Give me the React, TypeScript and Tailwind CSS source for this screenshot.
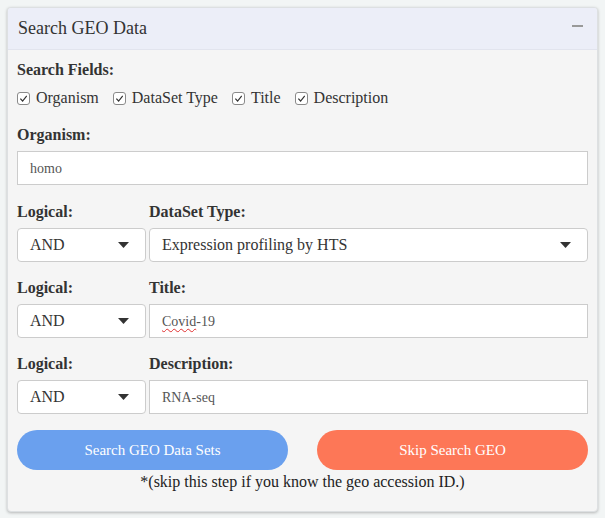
import React from 'react';

const serif = { fontFamily: '"Liberation Serif", "Times New Roman", serif' };

const Check: React.FC<{ label: string }> = ({ label }) => (
    <label className="flex items-center gap-[6px]">
        <span className="flex h-[13px] w-[13px] items-center justify-center rounded-[3px] border border-[#8a8a8a] bg-white">
            <svg width="9" height="9" viewBox="0 0 10 10">
                <path d="M1.5 5.2 L4 7.8 L8.6 2" fill="none" stroke="#333" strokeWidth="1.3" />
            </svg>
        </span>
        <span>{label}</span>
    </label>
);

const Caret = () => (
    <svg width="11" height="6" viewBox="0 0 11 6">
        <path d="M0 0 L11 0 L5.5 6 Z" fill="#333" />
    </svg>
);

const Select: React.FC<{ value: string; className?: string }> = ({ value, className }) => (
    <div
        className={`flex h-[34px] items-center justify-between rounded-[4px] border border-[#ccc] bg-white pl-[12px] pr-[16px] text-[16px] text-[#333] ${className ?? ''}`}
    >
        <span>{value}</span>
        <Caret />
    </div>
);

const Input: React.FC<{ value: string; spell?: boolean }> = ({ value, spell }) => (
    <div className="flex h-[34px] flex-1 items-center border border-[#ccc] bg-white px-[12px] text-[14px] text-[#555]">
        {spell ? (
            <span>
                <span className="underline decoration-wavy decoration-[#e03030] decoration-1 underline-offset-2">Covid</span>-19
            </span>
        ) : (
            value
        )}
    </div>
);

const LogicalRow: React.FC<{ label: string; children: React.ReactNode }> = ({ label, children }) => (
    <div className="flex flex-col">
        <div className="flex h-[22px] items-center text-[16px] font-bold text-[#333]">
            <span className="w-[132px]">Logical:</span>
            <span>{label}</span>
        </div>
        <div className="mt-[5px] flex gap-[3px]">
            <Select value="AND" className="w-[129px]" />
            {children}
        </div>
    </div>
);

export default function App() {
    return (
        <div className="min-h-screen bg-[#f2f5f5] p-[7px]" style={serif}>
            <div className="overflow-hidden rounded-[4px] border border-[#dde0e2] bg-[#f5f5f5] shadow-[0_1px_3px_rgba(0,0,0,0.25)]">
                <div className="flex h-[42px] items-center justify-between border-b border-[#e2e4ee] bg-[#eceef8] pl-[10px] pr-[14px]">
                    <span className="text-[18px] text-[#333]">Search GEO Data</span>
                    <span className="mb-[6px] h-[2px] w-[11px] bg-[#999]" />
                </div>
                <div className="px-[9px] pb-[17px] pt-[9px] text-[#333]">
                    <div className="flex h-[22px] items-center text-[16px] font-bold">Search Fields:</div>
                    <div className="mt-[5px] flex items-center gap-[14px] text-[16px]">
                        <Check label="Organism" />
                        <Check label="DataSet Type" />
                        <Check label="Title" />
                        <Check label="Description" />
                    </div>
                    <div className="mt-[14px] flex h-[22px] items-center text-[16px] font-bold">Organism:</div>
                    <div className="mt-[5px] flex">
                        <Input value="homo" />
                    </div>
                    <div className="mt-[16px] flex flex-col gap-[15px]">
                        <LogicalRow label="DataSet Type:">
                            <Select value="Expression profiling by HTS" className="flex-1" />
                        </LogicalRow>
                        <LogicalRow label="Title:">
                            <Input value="Covid-19" spell />
                        </LogicalRow>
                        <LogicalRow label="Description:">
                            <Input value="RNA-seq" />
                        </LogicalRow>
                    </div>
                    <div className="mt-[16px] flex justify-between">
                        <button className="h-[40px] w-[271px] rounded-full bg-[#6aa0ee] text-[15px] text-white">
                            Search GEO Data Sets
                        </button>
                        <button className="h-[40px] w-[271px] rounded-full bg-[#fd7757] text-[15px] text-white">
                            Skip Search GEO
                        </button>
                    </div>
                    <p className="text-center text-[16px] text-[#222]">*(skip this step if you know the geo accession ID.)</p>
                </div>
            </div>
        </div>
    );
}
